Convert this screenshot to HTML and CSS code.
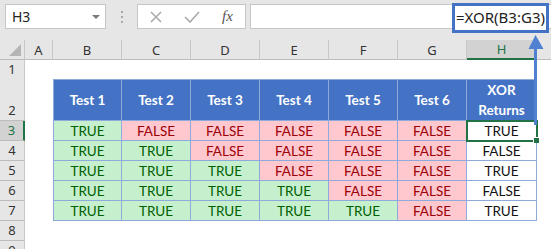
FILE: index.html
```html
<!DOCTYPE html>
<html lang="en">

<head>
  <meta charset="UTF-8">
  <title>XOR Returns</title>
  <link rel="stylesheet" href="styles.css">
</head>

<body>
  <div class="bar">
    <div class="namebox"><span>H3</span><span class="caret"></span></div>
    <div class="grip">
      <svg width="4" height="14" viewBox="0 0 4 14"><rect x="1" y="1" width="2" height="2"/><rect x="1" y="6" width="2" height="2"/><rect x="1" y="11" width="2" height="2"/></svg>
    </div>
    <div class="fxbox">
      <svg class="ico" width="12" height="12" viewBox="0 0 12 12"><path d="M1 1 L11 11 M11 1 L1 11"/></svg>
      <svg class="ico" width="16" height="12" viewBox="0 0 16 12"><path d="M1 6 L6 11 L15 1"/></svg>
      <i class="fx">fx</i>
    </div>
    <div class="formula"></div>
    <div class="callout">=XOR(B3:G3)</div>
  </div>

  <div class="sheet">
    <div class="row head">
      <div class="corner"><span class="tri"></span></div>
      <div class="ch">A</div><div class="ch">B</div><div class="ch">C</div><div class="ch">D</div>
      <div class="ch">E</div><div class="ch">F</div><div class="ch">G</div><div class="ch on">H</div>
      <div class="ch last"></div>
    </div>
    <div class="row r1">
      <div class="rh">1</div>
    </div>
    <div class="row r2">
      <div class="rh">2</div><div></div>
      <div class="d th first">Test 1</div><div class="d th">Test 2</div><div class="d th">Test 3</div>
      <div class="d th">Test 4</div><div class="d th">Test 5</div><div class="d th">Test 6</div>
      <div class="d th">XOR<br>Returns</div>
    </div>
    <div class="row">
      <div class="rh on">3</div><div></div>
      <div class="d t first">TRUE</div><div class="d f">FALSE</div><div class="d f">FALSE</div>
      <div class="d f">FALSE</div><div class="d f">FALSE</div><div class="d f">FALSE</div>
      <div class="d res sel">TRUE</div>
    </div>
    <div class="row">
      <div class="rh">4</div><div></div>
      <div class="d t first">TRUE</div><div class="d t">TRUE</div><div class="d f">FALSE</div>
      <div class="d f">FALSE</div><div class="d f">FALSE</div><div class="d f">FALSE</div>
      <div class="d res">FALSE</div>
    </div>
    <div class="row">
      <div class="rh">5</div><div></div>
      <div class="d t first">TRUE</div><div class="d t">TRUE</div><div class="d t">TRUE</div>
      <div class="d f">FALSE</div><div class="d f">FALSE</div><div class="d f">FALSE</div>
      <div class="d res">TRUE</div>
    </div>
    <div class="row">
      <div class="rh">6</div><div></div>
      <div class="d t first">TRUE</div><div class="d t">TRUE</div><div class="d t">TRUE</div>
      <div class="d t">TRUE</div><div class="d f">FALSE</div><div class="d f">FALSE</div>
      <div class="d res">FALSE</div>
    </div>
    <div class="row">
      <div class="rh">7</div><div></div>
      <div class="d t first">TRUE</div><div class="d t">TRUE</div><div class="d t">TRUE</div>
      <div class="d t">TRUE</div><div class="d t">TRUE</div><div class="d f">FALSE</div>
      <div class="d res">TRUE</div>
    </div>
    <div class="row">
      <div class="rh">8</div>
    </div>
    <div class="row">
      <div class="rh">9</div>
    </div>
  </div>

  <svg class="arrow" width="18" height="92" viewBox="0 0 18 92">
    <rect x="7" y="14" width="3" height="78"/>
    <polygon points="1.5,16 8.5,2 16.5,16"/>
  </svg>
</body>

</html>
```

FILE: styles.css
```css
html, body {
  margin: 0;
  height: 249px;
  overflow: hidden;
  background: #ffffff;
}

body {
  position: relative;
  font-family: "Noto Sans", sans-serif;
}

/* formula bar */
.bar {
  height: 40px;
  box-sizing: border-box;
  padding: 4px 0 0 5px;
  background: #e6e6e6;
  display: flex;
  align-items: flex-start;
}

.namebox {
  width: 101px;
  height: 25px;
  box-sizing: border-box;
  border: 1px solid #c6c6c6;
  background: #fff;
  display: flex;
  align-items: center;
  justify-content: space-between;
  padding: 0 5px 0 6px;
  font-size: 14px;
  color: #222;
}

.caret {
  width: 0;
  height: 0;
  border-left: 4px solid transparent;
  border-right: 4px solid transparent;
  border-top: 4px solid #7a7a7a;
}

.grip {
  width: 31px;
  height: 25px;
  display: flex;
  align-items: center;
  justify-content: center;
}

.grip svg {
  fill: #a9a9a9;
}

.fxbox {
  width: 109px;
  height: 25px;
  box-sizing: border-box;
  border: 1px solid #c6c6c6;
  background: #fff;
  display: flex;
  align-items: center;
  padding-left: 12px;
}

.ico {
  fill: none;
  stroke: #ababab;
  stroke-width: 1.6;
}

.ico + .ico {
  margin-left: 22px;
}

.fx {
  margin-left: 22px;
  font-family: "Liberation Serif", serif;
  font-size: 15px;
  color: #555;
}

.formula {
  flex: 1;
  margin-left: 4px;
  height: 25px;
  box-sizing: border-box;
  border: 1px solid #c6c6c6;
  border-right: none;
  background: #fff;
}

.callout {
  position: absolute;
  left: 452px;
  top: 3px;
  width: 97px;
  height: 30px;
  box-sizing: border-box;
  border: 3px solid #4472c4;
  background: #fff;
  padding-left: 1px;
  font-size: 15px;
  line-height: 23px;
  color: #222;
}

/* sheet */
.row {
  display: grid;
  grid-template-columns: 25px 28px repeat(6, 69px) 70px 1fr;
  height: 20px;
}

.row.head {
  height: 20px;
  background: #e6e6e6;
}

.row.r1 {
  height: 19px;
}

.row.r2 {
  height: 42px;
}

.corner {
  border-right: 1px solid #c8c8c8;
  border-bottom: 1px solid #bdbdbd;
  position: relative;
}

.tri {
  position: absolute;
  right: 3px;
  bottom: 3px;
  width: 0;
  height: 0;
  border-left: 12px solid transparent;
  border-bottom: 12px solid #b5b5b5;
}

.ch {
  border-right: 1px solid #c8c8c8;
  border-bottom: 1px solid #bdbdbd;
  font-size: 13px;
  color: #333;
  display: flex;
  align-items: center;
  justify-content: center;
}

.ch.on {
  background: #d2d2d2;
  color: #217346;
  border-bottom: 2px solid #217346;
}

.ch.last {
  border-right: none;
}

.rh {
  background: #e6e6e6;
  border-right: 1px solid #c8c8c8;
  border-bottom: 1px solid #bdbdbd;
  font-size: 13px;
  color: #333;
  display: flex;
  align-items: flex-end;
  justify-content: center;
  line-height: 19px;
}

.rh.on {
  background: #d2d2d2;
  color: #217346;
  border-right: 2px solid #217346;
}

/* data table */
.d {
  border-right: 1px solid #8eaadb;
  border-bottom: 1px solid #8eaadb;
  display: flex;
  align-items: center;
  justify-content: center;
  font-family: Lato, sans-serif;
  font-size: 13.5px;
}

.d.first {
  border-left: 1px solid #8eaadb;
}

.d.th {
  border-top: 1px solid #8eaadb;
  background: #4472c4;
  color: #fff;
  font-weight: bold;
  text-align: center;
  line-height: 20px;
}

.d.t {
  background: #c6efce;
  color: #006100;
}

.d.f {
  background: #ffc7ce;
  color: #9c0006;
}

.d.res {
  background: #fff;
  color: #111;
}

.d.sel {
  position: relative;
  z-index: 1;
  outline: 2px solid #217346;
  outline-offset: -1px;
}

.d.sel::after {
  content: '';
  position: absolute;
  right: -3px;
  bottom: -3px;
  width: 5px;
  height: 5px;
  background: #217346;
  border: 1px solid #fff;
  border-right: none;
  border-bottom: none;
}

.arrow {
  position: absolute;
  left: 527px;
  top: 33px;
  z-index: 2;
  fill: #4f81d0;
}
```
